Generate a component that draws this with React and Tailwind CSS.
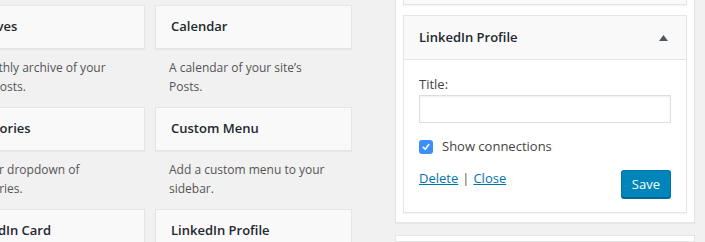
import React from 'react';

const available = [
  { title: 'Archives', desc: 'A monthly archive of your site’s Posts.' },
  { title: 'Calendar', desc: 'A calendar of your site’s Posts.' },
  { title: 'Categories', desc: 'A list or dropdown of categories.' },
  { title: 'Custom Menu', desc: 'Add a custom menu to your sidebar.' },
  { title: 'LinkedIn Card', desc: 'Display your LinkedIn card.' },
  { title: 'LinkedIn Profile', desc: 'Display your LinkedIn profile.' },
];

function WidgetTile({ title, desc }) {
  return (
    <div className="h-[102px]">
      <div className="h-[44px] flex items-center px-[15px] bg-[#f9f9f9] border border-[#e5e5e5] shadow-[0_1px_1px_rgba(0,0,0,0.04)] text-[13px] font-semibold text-[#23282d]">
        {title}
      </div>
      <p className="pt-[9px] px-[14px] text-[12px] leading-[19px] text-[#555]">{desc}</p>
    </div>
  );
}

function CheckedBox() {
  return (
    <span className="w-[14px] h-[14px] rounded-[3px] bg-[#3b8ff6] flex items-center justify-center">
      <svg width="10" height="10" viewBox="0 0 10 10">
        <path d="M2.2 5.3 L4.2 7.3 L7.8 2.6" fill="none" stroke="#fff" strokeWidth="1.6" strokeLinecap="round" strokeLinejoin="round" />
      </svg>
    </span>
  );
}

export default function App() {
  return (
    <div className="w-[705px] h-[242px] overflow-hidden bg-[#f1f1f1] flex font-['Open_Sans',sans-serif]">
      {/* available widgets */}
      <div className="ml-[-52px] pt-[5px] grid grid-cols-[197px_197px] gap-x-[10px] content-start shrink-0">
        {available.map((w) => (
          <WidgetTile key={w.title} {...w} />
        ))}
      </div>

      {/* sidebar */}
      <div className="ml-[43px] w-[300px] shrink-0 flex flex-col">
        <div className="mt-[-40px] bg-white border border-[#e5e5e5] shadow-[0_1px_1px_rgba(0,0,0,0.04)] px-[7px] pb-[9px]">
          <div className="h-[44px] bg-[#fafafa] border border-[#e5e5e5] shadow-[0_1px_1px_rgba(0,0,0,0.04)]" />

          <div className="mt-[10px] border border-[#e5e5e5] shadow-[0_1px_1px_rgba(0,0,0,0.04)]">
            <div className="h-[44px] bg-[#f9f9f9] border-b border-[#e5e5e5] flex items-center justify-between pl-[15px] pr-[18px]">
              <span className="text-[13px] font-semibold text-[#23282d]">LinkedIn Profile</span>
              <svg width="9" height="6" viewBox="0 0 9 6">
                <polygon points="4.5,0 9,6 0,6" fill="#50575e" />
              </svg>
            </div>
            <div className="bg-white px-[15px] pt-[15px] pb-[14px] text-[13px] text-[#444]">
              <label className="block leading-[19px]">Title:</label>
              <input
                type="text"
                className="mt-[1px] block w-full h-[28px] border border-[#ddd] shadow-[inset_0_1px_2px_rgba(0,0,0,0.07)] bg-white outline-none"
              />
              <div className="mt-[14px] flex items-center gap-[9px] leading-[19px]">
                <CheckedBox />
                <span>Show connections</span>
              </div>
              <div className="mt-[13px] flex items-start justify-between">
                <div className="leading-[19px]">
                  <a href="#" className="text-[#0073aa] underline">Delete</a>
                  <span className="mx-[4px] text-[#555]">|</span>
                  <a href="#" className="text-[#0073aa] underline">Close</a>
                </div>
                <button className="mt-[1px] h-[28px] px-[10px] rounded-[3px] bg-[#0085ba] border border-[#0073aa] border-b-[#006799] shadow-[0_1px_0_#006799] text-white text-[13px] leading-[26px]">
                  Save
                </button>
              </div>
            </div>
          </div>
        </div>

        <div className="mt-[12px] h-[40px] bg-white border border-[#e5e5e5] shadow-[0_1px_1px_rgba(0,0,0,0.04)]" />
      </div>
    </div>
  );
}
